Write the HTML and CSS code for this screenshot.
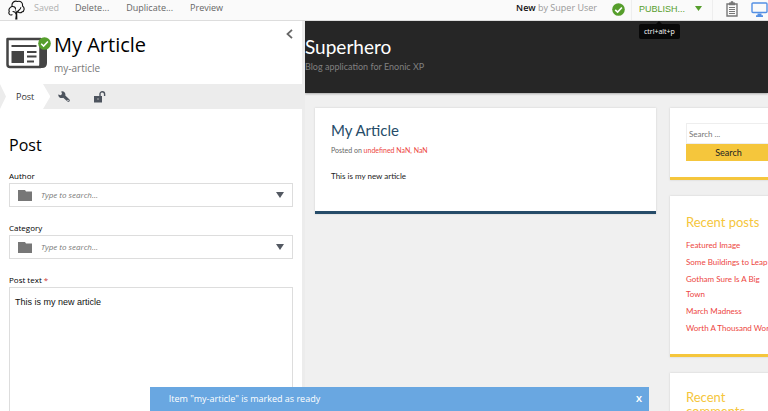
FILE: index.html
```html
<!DOCTYPE html>
<html lang="en">
<head>
<meta charset="utf-8">
<title>My Article</title>
<link rel="stylesheet" href="styles.css">
</head>
<body>
<header class="toolbar">
  <svg class="logo" viewBox="0 0 18 20" aria-hidden="true"><g fill="none" stroke="#111" stroke-width="1.1" stroke-linecap="round"><path d="M4.2 6.5C3 2.500 7 .3 9.500 1.500c3-.8 5.500 1 5 4.500 2.500 1.500 2 5.500-.6 6-1.200 1.200-3 .9-3.700-.1"/><path d="M4.200 6.500C1.800 7 .2 9.500 1.300 11.500 0 13.500 2 15.800 4 14.700"/><path d="M4.200 6.500c2-.3 3.300.8 3.300 2.500M5 11.500c1.500 0 2.800 1 3.400 3.200M12.800 7.500c-.3 2.500-3 2.800-3.800 5"/></g><path d="M7.200 19.500 8 13l-.8-4 1.500 2.500.5 1 .2 7z" fill="#111"/></svg>
  <button class="tool disabled" disabled>Saved</button>
  <button class="tool">Delete...</button>
  <button class="tool">Duplicate...</button>
  <button class="tool">Preview</button>
  <div class="status"><b>New</b> by Super User</div>
  <svg class="ready" viewBox="0 0 13 13" aria-hidden="true"><circle cx="6.500" cy="6.500" r="6.300" fill="#569e2c"/><path d="m3.200 6.800 2.400 2.300 4.300-4.600" fill="none" stroke="#fff" stroke-width="1.600"/></svg>
  <div class="publish">
    <button class="publish-main">PUBLISH...</button>
    <button class="publish-more" aria-label="More"><svg viewBox="0 0 7 5"><path d="M0 0h7L3.500 5z" fill="#569e2c"/></svg></button>
    <div class="tooltip">ctrl+alt+p</div>
  </div>
  <button class="icon-tool" aria-label="Versions"><svg viewBox="0 0 12 16" width="12" height="16"><path d="M1 3h10v12H1z" fill="none" stroke="#777" stroke-width="1.400"/><path d="M3 1.500h1.500a1.500 1.500 0 0 1 3 0H9v2.800H3z" fill="#777"/><path d="M3 6.500h6M3 8.500h6M3 10.500h6M3 12.500h6" stroke="#777"/></svg></button>
  <button class="icon-tool" aria-label="Desktop"><svg viewBox="0 0 17 16" width="17" height="16"><rect x="1" y="2" width="15" height="9.500" rx="1" fill="none" stroke="#5490e4" stroke-width="1.400"/><path d="M6.500 12.500h4v1.800H12V16H5v-1.700h1.500z" fill="#5490e4"/></svg></button>
</header>
<main class="workspace">
  <section class="editor">
    <div class="summary">
      <div class="type-icon">
        <svg viewBox="0 0 41 34" aria-hidden="true"><path d="M1.500 3h33v28H4q-2.500 0-2.500-2.500z" fill="#fff" stroke="#444" stroke-width="2.500" stroke-linejoin="round"/><path d="M34 6h7v21q0 5-5 5H30q4-1 4-5z" fill="#444"/><path d="M5.500 10h25M21 16h9.500M21 20.500h9.500M21 25.500h7" stroke="#444" stroke-width="2.200"/><path d="M5.500 15h12.500v12H5.500z" fill="#444"/></svg>
        <svg class="badge" viewBox="0 0 13 13" aria-hidden="true"><circle cx="6.500" cy="6.500" r="6.300" fill="#569e2c"/><path d="m3.200 6.800 2.400 2.300 4.300-4.600" fill="none" stroke="#fff" stroke-width="1.500"/></svg>
      </div>
      <div class="names"><h1>My Article</h1><div class="path">my-article</div></div>
      <button class="collapse" aria-label="Collapse"><svg viewBox="0 0 7 10" width="7" height="10"><path d="M6 .8 1.500 5 6 9.200" fill="none" stroke="#666" stroke-width="1.800"/></svg></button>
    </div>
    <nav class="steps">
      <a class="step current" href="#post">Post</a>
      <a class="step" href="#settings" aria-label="Settings"><svg viewBox="0 0 12 12" width="12" height="12"><path d="M.3 3.500 2.700 4.300 4 3 3.300.4C5.600-.4 8 1.700 7.300 4.500l4.200 4.100c1 1.300-.8 3-2 2L5.200 6.800C2.500 7.800 0 5.800.3 3.500z" fill="#4d545e"/><circle cx="10" cy="9.500" r=".7" fill="#eee"/></svg></a>
      <a class="step" href="#access" aria-label="Access"><svg viewBox="0 0 12 12" width="12" height="12"><path d="M0 5h8v6.500H0z" fill="#4d545e"/><path d="M6 5.500V3a2.200 2.200 0 0 1 4.600 0V5" fill="none" stroke="#4d545e" stroke-width="1.400"/><path d="M4 7v2" stroke="#aaa"/></svg></a>
    </nav>
    <form class="form" id="post">
      <h2>Post</h2>
      <div class="field">
        <label for="author">Author</label>
        <div class="combo"><svg class="folder" viewBox="0 0 14 11" aria-hidden="true"><path d="M0 0h7l1 1.500h6V11H0z" fill="#777"/></svg><input id="author" type="text" placeholder="Type to search..."><button type="button" aria-label="Show authors"><svg viewBox="0 0 8 6"><path d="M0 0h8L4 6z" fill="#535962"/></svg></button></div>
      </div>
      <div class="field">
        <label for="category">Category</label>
        <div class="combo"><svg class="folder" viewBox="0 0 14 11" aria-hidden="true"><path d="M0 0h7l1 1.500h6V11H0z" fill="#777"/></svg><input id="category" type="text" placeholder="Type to search..."><button type="button" aria-label="Show categories"><svg viewBox="0 0 8 6"><path d="M0 0h8L4 6z" fill="#535962"/></svg></button></div>
      </div>
      <div class="field grow">
        <label for="text">Post text <span class="required">*</span></label>
        <textarea id="text">This is my new article</textarea>
      </div>
    </form>
  </section>
  <section class="site">
    <header class="site-header"><div class="site-title">Superhero</div><div class="tagline">Blog application for Enonic XP</div></header>
    <div class="site-body">
      <article class="card post">
        <h2>My Article</h2>
        <p class="meta">Posted on <a href="#date">undefined NaN, NaN</a></p>
        <p>This is my new article</p>
      </article>
      <aside class="sidebar">
        <form class="card search"><input type="search" aria-label="Search" placeholder="Search ..."><button type="button">Search</button></form>
        <div class="card recent">
          <h3>Recent posts</h3>
          <ul><li><a href="#p1">Featured Image</a></li><li><a href="#p2">Some Buildings to Leap</a></li><li><a href="#p3">Gotham Sure Is A Big Town</a></li><li><a href="#p4">March Madness</a></li><li><a href="#p5">Worth A Thousand Words</a></li></ul>
        </div>
        <div class="card"><h3>Recent comments</h3></div>
      </aside>
    </div>
  </section>
</main>
<div class="toast" role="status"><span>Item "my-article" is marked as ready</span><button aria-label="Close">X</button></div>
</body>
</html>
```
FILE: styles.css
```css
* { box-sizing: border-box; }
body {
  margin: 0;
  height: 100vh;
  display: flex;
  flex-direction: column;
  overflow: hidden;
  background: #fff;
  color: #000;
  font: 9px/16px "Open Sans", sans-serif;
}
button { padding: 0; border: 0; background: none; font: inherit; color: inherit; }
a { text-decoration: none; }
svg { display: block; }
h1, h2, h3, p, ul { margin: 0; padding: 0; font-weight: 400; }

.toolbar {
  display: flex;
  align-items: center;
  flex: none;
  height: 21px;
  padding: 0 0 4px 8px;
  background: #fafafa;
  border-bottom: 1px solid #ddd;
  color: #666;
}
.logo { width: 18px; height: 20px; margin: 3px 8px 0 0; }
.tool { margin-right: 17px; white-space: nowrap; }
.tool.disabled { margin-right: 16px; color: #b0b0b0; }
.status { margin-left: auto; color: #999; white-space: nowrap; }
.status b { color: #111; font-weight: 600; }
.ready { width: 13px; height: 13px; margin: 2px 6px 0 15px; }
.publish {
  position: relative;
  display: flex;
  align-items: center;
  gap: 10px;
  height: 20px;
  margin-top: 3px;
  padding: 0 10px 2px 7px;
  border: solid #eee;
  border-width: 0 1px;
  color: #569e2c;
}
.publish-main { font-family: "Liberation Sans", sans-serif; }
.publish-more svg { width: 7px; height: 5px; }
.tooltip {
  position: absolute;
  z-index: 3;
  top: 24px;
  left: 7px;
  padding: 0 5px;
  border-radius: 2px;
  background: #080808;
  color: #fff;
  font-size: 7px;
  line-height: 15px;
}
.tooltip::before {
  content: "";
  position: absolute;
  top: -3px;
  left: 50%;
  margin-left: -3px;
  border: solid transparent;
  border-width: 0 3px 3px;
  border-bottom-color: #080808;
}
.icon-tool { margin: 2px 0 0 13px; }

.workspace {
  display: grid;
  grid-template-columns: minmax(0, 302fr) minmax(0, 463fr);
  gap: 3px;
  flex: 1;
  min-height: 0;
  background: #ececec;
}
.editor { display: flex; flex-direction: column; min-height: 0; background: #fff; }
.summary { display: flex; flex: none; height: 63px; padding: 8px 9px 0 6px; }
.type-icon { position: relative; width: 48px; padding-top: 7px; }
.type-icon > svg:first-child { width: 41px; height: 34px; }
.type-icon .badge { position: absolute; top: 8px; left: 32px; width: 13px; height: 13px; }
.names { flex: 1; }
h1 { font-size: 20px; line-height: 32px; }
.path { color: #777; font-size: 10px; line-height: 14px; }
.collapse { align-self: flex-start; }
.steps { display: flex; flex: none; height: 25px; background: #ececec; }
.step { display: flex; align-items: center; margin-left: 8px; padding-right: 16px; color: #333; }
.step.current {
  margin-left: 0;
  padding: 0 16px;
  background: #fff;
  clip-path: polygon(0 0, 43px 0, 100% 50%, 43px 100%, 0 100%, 6px 50%);
}
.form { display: flex; flex-direction: column; flex: 1; min-height: 0; padding: 24px 9px 0; }
.form h2 { margin-bottom: 12px; font-size: 16px; line-height: 24px; }
.field { margin-bottom: 14px; font-size: 8px; line-height: 14px; }
.field label { display: block; }
.grow { display: flex; flex: 1; flex-direction: column; margin: 0; }
.required { color: #c33; }
.combo { display: flex; align-items: center; height: 24px; padding: 0 8px; border: 1px solid #ddd; }
.folder { width: 14px; height: 11px; margin-right: 9px; }
.combo input { flex: 1; min-width: 0; padding: 0; border: 0; background: none; font: italic 8px/16px "Open Sans", sans-serif; }
.combo input::placeholder { color: #777; }
.combo button svg { width: 8px; height: 6px; }
.grow textarea {
  flex: 1;
  padding: 8px 5px;
  border: 1px solid #ddd;
  border-bottom: 0;
  resize: none;
  color: #111;
  font: 9px/12px "Liberation Sans", sans-serif;
}

.site {
  min-height: 0;
  overflow: hidden;
  background: #f0f0f0;
  color: #222;
  font: 8px/15px Lato, sans-serif;
}
.site-header { height: 72px; padding-top: 14px; background: #262626; box-shadow: 0 1px 2px #aaa; }
.site-title { color: #fff; font-size: 19px; line-height: 24px; }
.tagline { color: #808080; font-size: 9px; line-height: 15px; }
.site-body { display: flex; align-items: flex-start; gap: 14px; margin-right: -19px; padding: 15px 0 0 10px; }
.card { padding: 16px; border-bottom: 3px solid #f5c63c; background: #fff; box-shadow: 0 0 2px #ccc; }
.card a { color: #ed4641; }
.post { flex: 1; height: 106px; padding-top: 12px; border-color: #264c69; }
.post h2 { margin-bottom: 3px; color: #264c69; font-size: 15px; line-height: 20px; }
.meta { margin-bottom: 11px; color: #666; font-size: 7px; }
.sidebar { display: grid; flex: 0 0 117px; gap: 16px; }
.search { display: grid; height: 72px; padding-top: 15px; }
.search input { min-width: 0; height: 21px; padding: 0 2px; border: 1px solid #eee; border-radius: 0; font: inherit; appearance: none; }
.search button { height: 17px; background: #f5c63c; color: #222; font-size: 9px; }
h3 { color: #f5c63c; font-size: 13px; line-height: 14px; }
.card h3 { margin: 1px 0 9px; }
.recent { padding: 18px 8px 16px 16px; }
ul { list-style: none; }
li { margin-bottom: 2px; }

.toast {
  position: absolute;
  z-index: 2;
  right: 15.5%;
  bottom: 0;
  left: 19.5%;
  height: 24px;
  display: flex;
  align-items: center;
  justify-content: space-between;
  padding: 0 7px 0 19px;
  background: #69a7e1;
  color: #fff;
}
.toast button { font-weight: 700; }
```
